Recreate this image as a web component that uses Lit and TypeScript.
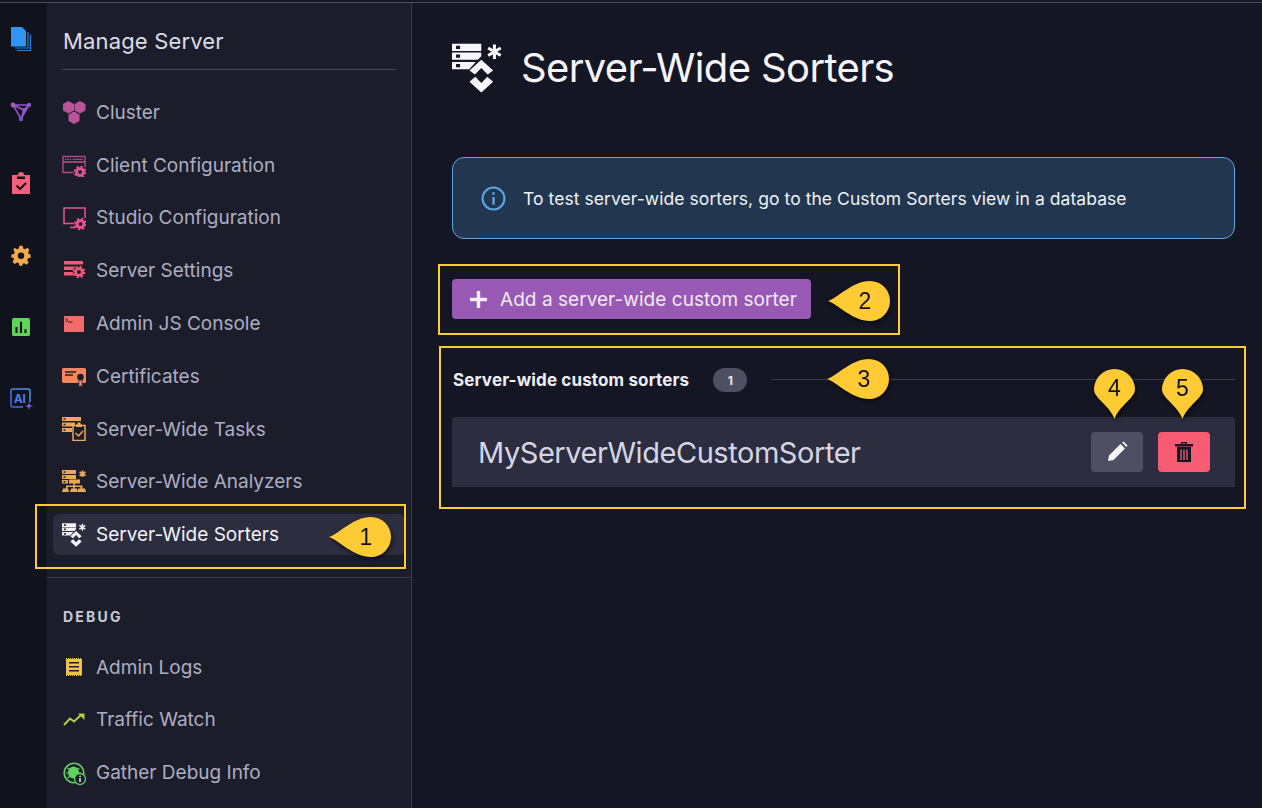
import {LitElement, html, css, svg} from 'lit'
import {customElement} from 'lit/decorators.js'

const sorterIcon = (c: string, hole: string) => html`
  <svg viewBox="0 0 49.500 49.500">
    <path fill=${c} d="M0 .7h29V8H0zM0 9.300h29V13l-3.500 3.700H0zM0 18.700h23.500L17 26H0z"/>
    <path fill=${hole} d="M4 2.700h4V6H4zM4 11.300h4v3.400H4zM4 20.700h4V24H4z"/>
    <path fill=${c} d="M29 16.700l11.700 10.600-5.400 4L29 24.700l-6.300 6.600-5.400-4zM17.300 38.300l5.700-5 6 6.400 6-6.400 5.700 5L29 49z"/>
    <path stroke=${c} stroke-width="3" d="M42 1.500v14.400M35.800 5l12.400 7.400M48.200 5l-12.400 7.400"/>
  </svg>
`

// teeth come from a dashed ring around a thick circle
const gear = (x: number, y: number, c: string, bg = '#1b1d2b') => svg`
  <circle cx=${x} cy=${y} r="6.200" fill=${bg}/>
  <circle cx=${x} cy=${y} r="4.800" fill=${c}/>
  <circle cx=${x} cy=${y} r="5.300" fill="none" stroke=${c} stroke-width="2" stroke-dasharray="2.160 2"/>
  <circle cx=${x} cy=${y} r="2" fill=${bg}/>
`

const navIcons: Record<string, unknown> = {
  cluster: html`<svg viewBox="0 0 24 24"><path fill="#b9549b" d="M6.500 1l5.500 3v6.500l-5.500 3-5.500-3V4zM18 1l5.500 3v6.500l-5.500 3-5.500-3V4zM12 11.500l5.500 3V21l-5.500 3-5.500-3v-6.500z"/></svg>`,
  client: html`<svg viewBox="0 0 24 24"><path fill="none" stroke="#a84a85" stroke-width="1.400" d="M14 19.500H1V3.500h22v11"/><path stroke="#c05090" stroke-width="1.500" d="M1 9h22"/><path stroke="#c05090" stroke-width="1.300" stroke-dasharray="1.500 1" d="M3 6.300h6"/><path stroke="#c05090" stroke-width="1" d="M10.500 6.300H21"/>${gear(18, 19, '#e0568f')}</svg>`,
  studio: html`<svg viewBox="0 0 24 24"><path fill="none" stroke="#f0508f" stroke-width="1.500" d="M12 17.500H2V2h21v10M8 21.500h5V18"/>${gear(18.500, 18, '#f0508f')}</svg>`,
  settings: html`<svg viewBox="0 0 24 24"><path fill="#ee5a78" d="M2 2h19v3.500H2zM2 7.500h12V11H2zM2 13h10v3.500H2z"/>${gear(17, 13, '#ee5a78')}</svg>`,
  console: html`<svg viewBox="0 0 24 24"><rect x="2" y="4" width="20" height="16" fill="#f26a6a"/><path fill="none" stroke="#1b1d2b" stroke-width="1" d="M3.500 6.500l2.500 1.800-2.500 1.800M6.500 10h4"/></svg>`,
  certs: html`<svg viewBox="0 0 24 24"><path fill="#f5855c" d="M1.500 4h21a1.500 1.500 0 011.500 1.500v12a1.500 1.500 0 01-1.500 1.500H1.500A1.500 1.500 0 010 17.500v-12A1.500 1.500 0 011.500 4z"/><path stroke="#1b1d2b" stroke-width="1.300" d="M3 8h11M3 11h8"/><circle cx="18.500" cy="13" r="3.300" fill="#1b1d2b"/><path fill="#f5855c" stroke="#1b1d2b" stroke-width=".7" d="M16.800 16h3.400v7l-1.700-1-1.700 1z"/></svg>`,
  tasks: html`<svg viewBox="0 0 24 24"><path fill="#f0a65c" d="M0 0h19v4H0zM0 5.500h13v4H0zM0 11h10v4H0z"/><path fill="#1b1d2b" d="M1.500 1.300h2v1.500h-2zM1.500 6.800h2v1.500h-2zM1.500 12.300h2v1.500h-2z"/><path fill="#1b1d2b" stroke="#f0a65c" stroke-width="1.500" d="M11 8.500h12v15H11z"/><path fill="#f0a65c" d="M14 7.500h6V10h-6zM15.500 5.500h3v2h-3z"/><path fill="none" stroke="#f0a65c" stroke-width="1.500" d="M13.500 16l3 3 4.500-5"/></svg>`,
  analyzers: html`<svg viewBox="0 0 24 24"><path fill="#eaa95a" d="M0 0h14v4H0zM0 5h14v4H0zM0 10h6v3.500H0zM7 9.500h11v4H7zM11.500 13.500v2H4v3H1l-1 3.500h7l-1-3.500H5.500v-1.500h5.700v1.500H9l-1 3.500h8l-1-3.500h-2.300v-1.500h5.800v1.500H17l-1 .5v3h8l-1-3.500h-2.500v-3h-7.500v-2z"/><path fill="#1b1d2b" d="M1.500 1.300h2v1.500h-2zM1.500 6.300h2v1.500h-2zM1.500 11h2v1.500h-2z"/><path stroke="#eaa95a" stroke-width="1.800" d="M20.500 .5v6.500M17.500 2l6 3.500M23.500 2l-6 3.500"/></svg>`,
  sorters: sorterIcon('#f2f2f8', '#2c2d3f'),
  logs: html`<svg viewBox="0 0 24 24"><path fill="#ecc542" d="M4 4h16v16H4z"/><path stroke="#ecc542" stroke-width="1" stroke-dasharray="1 1" d="M4 3.500h16M4 20.500h16"/><path fill="#1b1d2b" d="M7 7h10v1.500H7zM7 11h10v1.500H7zM7 15h10v1.500H7z"/></svg>`,
  traffic: html`<svg viewBox="0 0 24 24"><path fill="none" stroke="#b5cf45" stroke-width="2" d="M2 17l6-6.500 4 3 7.500-7"/><path fill="#b5cf45" d="M16 5.500h6.500V12z"/></svg>`,
  debug: html`<svg viewBox="0 0 24 24"><circle cx="12" cy="12" r="9.800" fill="none" stroke="#5dd35d" stroke-width="1.600"/><ellipse cx="11.500" cy="11.500" rx="5.500" ry="6" fill="#5dd35d"/><path stroke="#5dd35d" stroke-width="1.200" d="M5.500 7l3 2M17.500 7l-3 2M4 12h3M15 12h4M5.500 17l3-2"/><circle cx="18" cy="18" r="5.500" fill="#1b1d2b" stroke="#5dd35d" stroke-width="1.300"/><path stroke="#f0f0f0" stroke-width="1.500" d="M18 17v4M18 14.800v1.300"/></svg>`,
}

const railIcons = [
  html`<svg viewBox="0 0 24 24"><path fill="none" stroke="#1f86e6" stroke-width="1.200" d="M19 5v16H6M21.500 7.500v16H8"/><path fill="#2f95f5" d="M2 0h11l4 4v15.500H2z"/></svg>`,
  html`<svg viewBox="0 0 24 24"><path fill="none" stroke="#8f58c8" stroke-width="1.600" d="M4 6h16L12 20zM4 6l11 5-3 9M15 11l5-5"/><circle cx="4" cy="6" r="2.400" fill="#a55cb8"/><circle cx="20" cy="6" r="2.200" fill="#8f58c8"/><circle cx="15" cy="11" r="2" fill="#8f58c8"/><circle cx="12" cy="20" r="2.200" fill="#7a52d0"/></svg>`,
  html`<svg viewBox="0 0 24 24"><path fill="#f4607c" d="M3 4h6a3 3 0 016 0h6v19H3z"/><path fill="#11131c" d="M8 5.500h8V8H8z"/><path fill="none" stroke="#11131c" stroke-width="2" d="M7.500 14.500l3.500 3.500 6-6"/></svg>`,
  html`<svg viewBox="-3 -3.500 30 30"><path fill="#f2a94e" d="M10 0h4l.7 3.300 2.300 1 3-1.800 2.600 2.600-1.800 3 1 2.300L24 11v4l-3.200.7-1 2.300 1.800 3-2.600 2.600-3-1.800-2.300 1L14 25h-4l-.7-3.200-2.300-1-3 1.800-2.600-2.600 1.800-3-1-2.300L0 15v-4l3.200-.7 1-2.300-1.800-3L4 2.500l3 1.800 2.300-1z"/><circle cx="12" cy="12.500" r="4" fill="#11131c"/></svg>`,
  html`<svg viewBox="-4 -4 32 32"><rect x="0" y="0" width="24" height="24" rx="2.500" fill="#5fd35a"/><path stroke="#11131c" stroke-width="2.800" d="M6 20v-8M12 20V5M18 20v-5"/></svg>`,
  html`<svg viewBox="0 0 24 24"><defs><linearGradient id="aig" x1="0" y1="1" x2="1" y2="0"><stop stop-color="#4a5cf0"/><stop offset="1" stop-color="#3fa0f0"/></linearGradient></defs><path fill="none" stroke="url(#aig)" stroke-width="1.500" d="M14 20H4a2 2 0 01-2-2V4a2 2 0 012-2h15a2 2 0 012 2v11"/><text x="5" y="15.500" font-size="11.500" font-weight="700" fill="#4f7ff5" font-family="Inter, sans-serif">AI</text><path fill="#7a55e8" d="M20 15l1 3 3 1-3 1-1 3-1-3-3-1 3-1z"/></svg>`,
]

const items = [
  ['cluster', 'Cluster'],
  ['client', 'Client Configuration'],
  ['studio', 'Studio Configuration'],
  ['settings', 'Server Settings'],
  ['console', 'Admin JS Console'],
  ['certs', 'Certificates'],
  ['tasks', 'Server-Wide Tasks'],
  ['analyzers', 'Server-Wide Analyzers'],
  ['sorters', 'Server-Wide Sorters'],
]

const debugItems = [
  ['logs', 'Admin Logs'],
  ['traffic', 'Traffic Watch'],
  ['debug', 'Gather Debug Info'],
]

// numbered callouts pasted over the screenshot, x/y is the top left corner
const pins = [
  {n: 1, x: 329, y: 517, down: false},
  {n: 2, x: 828, y: 281, down: false},
  {n: 3, x: 827, y: 359, down: false},
  {n: 4, x: 1094, y: 369, down: true},
  {n: 5, x: 1162, y: 369, down: true},
]

const frames = [
  {x: 35, y: 504, w: 371, h: 65},
  {x: 438, y: 264, w: 462, h: 71},
  {x: 439, y: 346, w: 807, h: 163},
]

@customElement('app-root')
export class AppRoot extends LitElement {
  static styles = css`
    :host {
      display: block;
      position: relative;
      width: 1262px;
      height: 808px;
      overflow: hidden;
      background: #141723;
      font-family: Inter, "Noto Sans", sans-serif;
      color: #e8e8f2;
    }
    .shell {
      display: flex;
      height: 806px;
      box-sizing: border-box;
      margin-top: 2px;
      border-top: 1px solid #4a4b5c;
    }
    .rail {
      width: 47px;
      flex: none;
      background: #11131c;
      display: flex;
      flex-direction: column;
      gap: 48px;
      padding: 24px 0 0 9px;
      box-sizing: border-box;
    }
    .rail svg {
      width: 24px;
      height: 24px;
      display: block;
    }
    .side {
      width: 365px;
      flex: none;
      box-sizing: border-box;
      background: #1b1d2b;
      border-right: 1px solid #3a3b4b;
      display: flex;
      flex-direction: column;
    }
    .side-title {
      margin: 0 15px 0 15px;
      padding: 24px 0 13px 1px;
      font-size: 22px;
      line-height: 29px;
      font-weight: 400;
      color: #dcdce8;
      border-bottom: 1px solid #454656;
      letter-spacing: 0.16px;
    }
    .nav {
      display: flex;
      flex-direction: column;
      gap: 12px;
      padding: 0 6px;
    }
    .nav.main {
      margin-top: 22px;
      padding-bottom: 22px;
      border-bottom: 1px solid #3a3b4b;
    }
    .item {
      display: flex;
      align-items: center;
      gap: 10px;
      height: 40.8px;
      padding-left: 9px;
      border-radius: 6px;
      font-size: 19px;
      letter-spacing: 0;
      color: #adadc2;
    }
    .item.on {
      background: #2c2d3f;
      color: #f2f2f8;
    }
    .icon {
      width: 24px;
      height: 24px;
      flex: none;
      display: flex;
      align-items: center;
    }
    .icon svg {
      width: 24px;
      height: 24px;
      display: block;
    }
    .group {
      margin: 30px 0 20.5px 16px;
      font-size: 14px;
      line-height: 18px;
      font-weight: 700;
      letter-spacing: 2.2px;
      color: #c9c9d8;
    }
    .main-pane {
      flex: 1;
      min-width: 0;
      padding: 0 27px 0 40px;
    }
    .head {
      display: flex;
      align-items: center;
      gap: 19px;
      height: 129px;
      box-sizing: border-box;
    }
    .head svg {
      width: 50px;
      height: 50px;
      flex: none;
    }
    h1 {
      margin: 0;
      font-size: 40px;
      font-weight: 400;
      letter-spacing: -0.64px;
      color: #f4f4fa;
    }
    .alert {
      margin-top: 25px;
      height: 82px;
      box-sizing: border-box;
      border: 1px solid #5aa7e6;
      border-radius: 12px;
      background: #22374f;
      display: flex;
      align-items: center;
      gap: 17px;
      padding-left: 28px;
      font-size: 17.500px;
      letter-spacing: 0.06px;
      color: #eef2f8;
    }
    .alert svg {
      width: 25px;
      height: 25px;
      flex: none;
    }
    .add {
      margin-top: 40px;
      display: inline-flex;
      align-items: center;
      gap: 12px;
      height: 40px;
      padding: 0 14px 0 17px;
      border-radius: 4px;
      background: #9759b3;
      font-size: 19px;
      letter-spacing: 0.04px;
      color: #f2e8f6;
    }
    .add svg {
      width: 19px;
      height: 19px;
    }
    .section {
      display: flex;
      align-items: center;
      margin-top: 49px;
      height: 24px;
      padding-left: 1px;
    }
    .section b {
      font-size: 17px;
      font-weight: 700;
      letter-spacing: 0.14px;
      color: #eeeef6;
    }
    .count {
      margin-left: 24px;
      width: 34px;
      height: 24px;
      border-radius: 12px;
      background: #4f4f64;
      display: flex;
      align-items: center;
      justify-content: center;
      font-size: 12px;
      font-weight: 700;
      color: #e8e8f2;
    }
    .rule {
      flex: 1;
      height: 1px;
      margin-left: 24px;
      margin-top: -2px;
      background: #3a3b4b;
    }
    .row {
      margin-top: 25px;
      height: 70px;
      display: flex;
      align-items: center;
      gap: 15px;
      padding: 0 25px 0 26px;
      background: #2c2d3f;
      border-radius: 4px 4px 0 0;
    }
    .row .name {
      flex: 1;
      font-size: 29px;
      letter-spacing: -0.45px;
      color: #d5d5e5;
    }
    .btn {
      width: 52px;
      height: 40px;
      border-radius: 4px;
      display: flex;
      align-items: center;
      justify-content: center;
    }
    .btn.edit {
      background: #4f4f64;
    }
    .btn.del {
      background: #f75c74;
    }
    .btn svg {
      width: 24px;
      height: 24px;
    }
    .frame {
      position: absolute;
      box-sizing: border-box;
      border: 2px solid #ffcb35;
    }
    .pin {
      position: absolute;
      filter: drop-shadow(1px 2px 2px rgba(0, 0, 0, 0.6));
    }
    .pin svg {
      display: block;
    }
    .pin span {
      position: absolute;
      font-family: "Liberation Sans", sans-serif;
      font-size: 23px;
      line-height: 26px;
      color: #111;
      text-align: center;
    }
    .pin.left span {
      left: 22px;
      top: 7px;
      width: 30px;
    }
    .pin.down span {
      left: 0;
      top: 6px;
      width: 41px;
    }
  `

  private renderItem(icon: string, label: string, on = false) {
    return html`<div class="item ${on ? 'on' : ''}">
      <span class="icon">${navIcons[icon]}</span>${label}
    </div>`
  }

  private renderPin(p: {n: number; x: number; y: number; down: boolean}) {
    return html`<div class="pin ${p.down ? 'down' : 'left'}" style="left:${p.x}px;top:${p.y}px">
      ${p.down
        ? html`<svg width="41" height="50" viewBox="0 0 41 50"><path fill="#ffcb35" d="M20.500 50C16 37 0 29 0 20.500a20.500 20.500 0 0141 0C41 29 25 37 20.500 50z"/></svg>`
        : html`<svg width="62" height="40" viewBox="0 0 62 40"><path fill="#ffcb35" d="M0 20C10 17 24 0 42 0a20 20 0 010 40C24 40 10 23 0 20z"/></svg>`}
      <span>${p.n}</span>
    </div>`
  }

  render() {
    return html`
      <div class="shell">
        <div class="rail">${railIcons}</div>
        <div class="side">
          <div class="side-title">Manage Server</div>
          <div class="nav main">
            ${items.map(([i, l]) => this.renderItem(i, l, i === 'sorters'))}
          </div>
          <div class="group">DEBUG</div>
          <div class="nav">${debugItems.map(([i, l]) => this.renderItem(i, l))}</div>
        </div>
        <div class="main-pane">
          <div class="head">
            ${sorterIcon('#f6f6fc', '#141723')}
            <h1>Server-Wide Sorters</h1>
          </div>
          <div class="alert">
            <svg viewBox="0 0 24 24"><circle cx="12" cy="12" r="10.500" fill="none" stroke="#58a8ea" stroke-width="2"/><path stroke="#58a8ea" stroke-width="2.200" d="M12 10.500V18M12 6v2.500"/></svg>
            To test server-wide sorters, go to the Custom Sorters view in a database
          </div>
          <div class="add">
            <svg viewBox="0 0 19 19"><path stroke="#f6f0fa" stroke-width="3.400" d="M9.500 1v17M1 9.500h17"/></svg>
            Add a server-wide custom sorter
          </div>
          <div class="section">
            <b>Server-wide custom sorters</b>
            <span class="count">1</span>
            <span class="rule"></span>
          </div>
          <div class="row">
            <span class="name">MyServerWideCustomSorter</span>
            <div class="btn edit">
              <svg viewBox="0 0 24 24"><path fill="#f6f6fc" d="M3 21l1-5.500L15.500 4l4.500 4.500L8.500 20zM17 2.500l1.500-1 4 4-1 1.500z"/></svg>
            </div>
            <div class="btn del">
              <svg viewBox="0 0 24 24"><path fill="#141723" d="M5 7h14v15H5zM3 4h18v2.500H3zM9 2h6v2.500h-1.500V3.200h-3v1.300H9z"/><path stroke="#f75c74" stroke-width="1.300" d="M9 9.500V20M12 9.500V20M15 9.500V20"/></svg>
            </div>
          </div>
        </div>
      </div>
      ${frames.map(f => html`<div class="frame" style="left:${f.x}px;top:${f.y}px;width:${f.w}px;height:${f.h}px"></div>`)}
      ${pins.map(p => this.renderPin(p))}
    `
  }
}
